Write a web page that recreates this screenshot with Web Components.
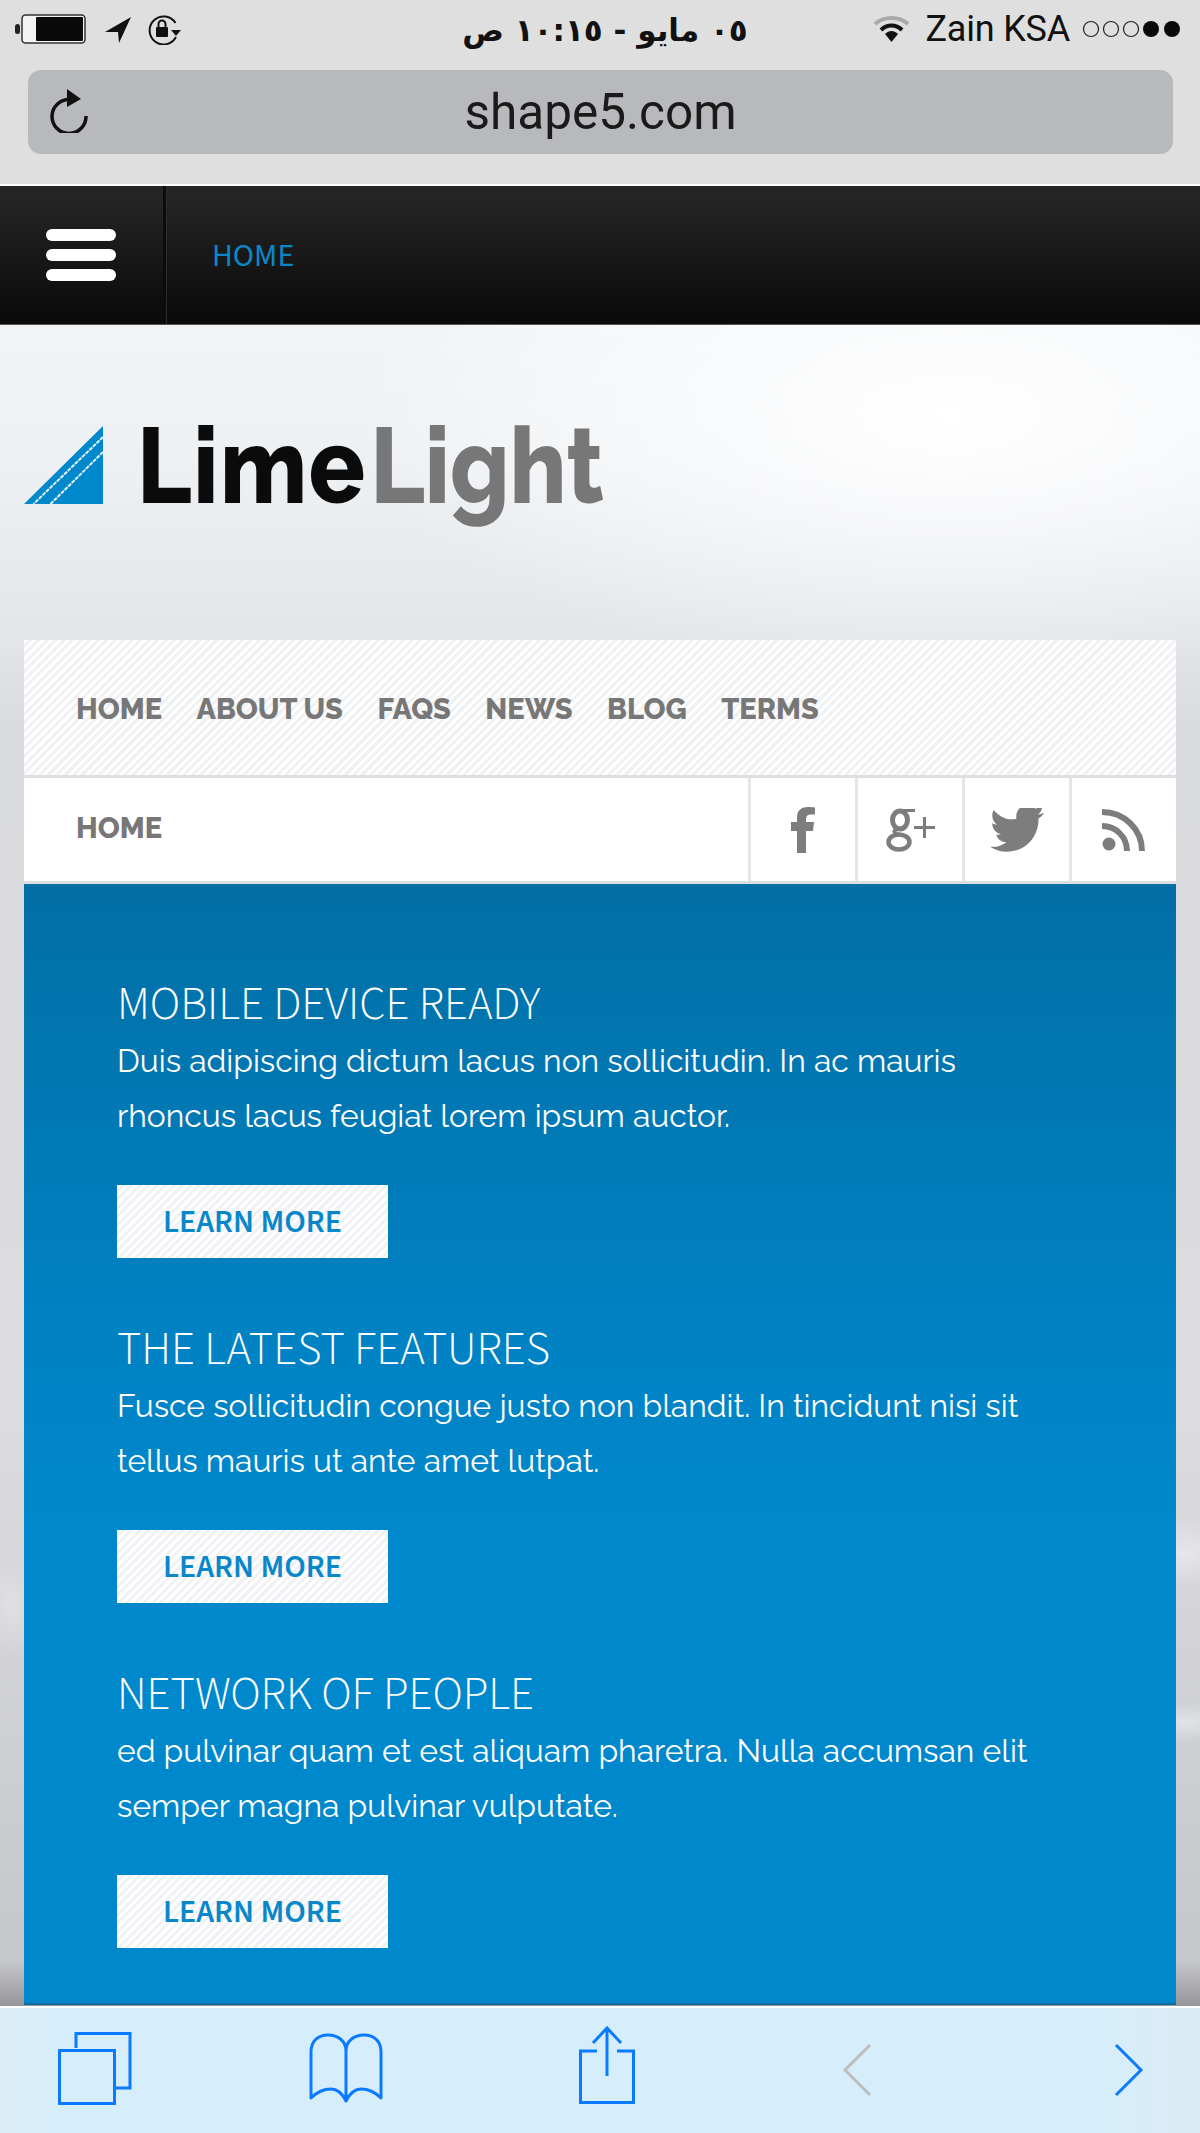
<!DOCTYPE html>
<html lang="en">
<head>
<meta charset="utf-8">
<title>LimeLight - shape5.com</title>
<style>
  html, body { margin: 0; padding: 0; }
  body {
    width: 1200px;
    height: 2133px;
    overflow: hidden;
    display: flex;
    flex-direction: column;
    font-family: "Liberation Sans", sans-serif;
  }
</style>
</head>
<body>
  <browser-chrome url="shape5.com"></browser-chrome>
  <site-nav><span>HOME</span></site-nav>
  <site-page>
    <site-logo></site-logo>
    <main-menu>
      <span>HOME</span><span>ABOUT US</span><span>FAQS</span><span>NEWS</span><span>BLOG</span><span>TERMS</span>
    </main-menu>
    <social-row>HOME</social-row>
    <feature-panel>
      <feature-item heading="MOBILE DEVICE READY">Duis adipiscing dictum lacus non sollicitudin. In ac mauris<br>rhoncus lacus feugiat lorem ipsum auctor.</feature-item>
      <feature-item heading="THE LATEST FEATURES">Fusce sollicitudin congue justo non blandit. In tincidunt nisi sit<br>tellus mauris ut ante amet lutpat.</feature-item>
      <feature-item heading="NETWORK OF PEOPLE">ed pulvinar quam et est aliquam pharetra. Nulla accumsan elit<br>semper magna pulvinar vulputate.</feature-item>
    </feature-panel>
  </site-page>
  <safari-toolbar></safari-toolbar>

<script>
// iOS status bar and address bar
class BrowserChrome extends HTMLElement {
  constructor() {
    super();
    this.attachShadow({ mode: "open" });
    this.shadowRoot.innerHTML = `
      <style>
        :host { display: block; height: 184px; background: #dfdfdf; border-bottom: 2px solid #fff; color: #111; }
        .status { height: 58px; display: grid; grid-template-columns: 1fr auto 1fr; align-items: center; }
        .left { display: flex; align-items: center; padding-left: 15px; }
        .right { display: flex; align-items: center; justify-content: flex-end; padding-right: 18px; }
        .arrow { margin-left: 19px; }
        .lock { margin-left: 17px; }
        .clock { font: 700 31px "DejaVu Sans", sans-serif; direction: rtl; white-space: nowrap; position: relative; top: 1px; left: 5px; }
        .carrier { font: 400 36px Roboto, sans-serif; margin-left: 16px; letter-spacing: -.2px; }
        .dots { margin-left: 12px; }
        .url {
          margin: 12px 27px 0 28px;
          height: 84px;
          border-radius: 13px;
          background: #b8b9bc;
          display: flex;
          align-items: center;
          justify-content: center;
          position: relative;
          font: 400 49.500px Roboto, sans-serif;
          color: #1a1a1a;
        }
        .reload { position: absolute; left: 21px; top: 19px; }
      </style>
      <div class="status">
        <div class="left">
          <svg width="71" height="30" viewBox="0 0 71 30">
            <rect x="0" y="10" width="5" height="10" rx="2.5" fill="#222"/>
            <rect x="7" y="1" width="63" height="28" rx="3.5" fill="#f4f4f4" stroke="#333" stroke-width="1.5"/>
            <rect x="21" y="3" width="47" height="24" rx="1" fill="#0a0a0a"/>
          </svg>
          <svg class="arrow" width="26" height="27" viewBox="0 0 26 27"><path d="M26 1 0 16h13l1 11z" fill="#111"/></svg>
          <svg class="lock" width="33" height="31" viewBox="0 0 33 31">
            <path d="M28 23A14 14 0 1 1 27.500 9" fill="none" stroke="#111" stroke-width="2"/>
            <path d="M23 16h10l-5 6z" fill="#111"/>
            <rect x="8" y="13" width="12" height="10" rx="1" fill="#111"/>
            <path d="M10.500 13V10a3.500 3.500 0 0 1 7 0v3" fill="none" stroke="#111" stroke-width="2"/>
          </svg>
        </div>
        <div class="clock">٠٥ مايو - ١٠:١٥ ص</div>
        <div class="right">
          <svg width="35" height="27" viewBox="0 0 35 27">
            <path d="M1 8C10 0 25 0 34 8" fill="none" stroke="#a9a9a9" stroke-width="4"/>
            <path d="M7 14C13 8 22 8 28 14" fill="none" stroke="#111" stroke-width="4"/>
            <path d="M11 18c4-4 9-4 13 0l-6.500 8z" fill="#111"/>
          </svg>
          <span class="carrier">Zain KSA</span>
          <svg class="dots" width="100" height="18" viewBox="0 0 100 18">
            <g fill="none" stroke="#222" stroke-width="1.200">
              <circle cx="9" cy="9" r="7.500"/><circle cx="29" cy="9" r="7.500"/><circle cx="49" cy="9" r="7.500"/>
            </g>
            <g fill="#0a0a0a"><circle cx="69" cy="9" r="8"/><circle cx="90" cy="9" r="8"/></g>
          </svg>
        </div>
      </div>
      <div class="url">
        <svg class="reload" width="40" height="44" viewBox="0 0 40 44">
          <path d="M21 10.500A17 17 0 1 0 37 27" fill="none" stroke="#111" stroke-width="3.500"/>
          <path d="M18 0 32 10 18 18z" fill="#111"/>
        </svg>
        <span>${this.getAttribute("url")}</span>
      </div>
    `;
  }
}
customElements.define("browser-chrome", BrowserChrome);

// Dark bar at the top of the site, hamburger on the left
class SiteNav extends HTMLElement {
  constructor() {
    super();
    this.attachShadow({ mode: "open" });
    this.shadowRoot.innerHTML = `
      <style>
        :host {
          display: flex;
          height: 138px;
          background: linear-gradient(#262626, #222 18%, #0b0b0b 92%);
          border-bottom: 1px solid #555;
          box-sizing: content-box;
        }
        .burger {
          width: 166px;
          box-sizing: border-box;
          padding-left: 46px;
          display: flex;
          flex-direction: column;
          justify-content: center;
          gap: 8px;
          border-right: 3px solid #0c0c0c;
          box-shadow: 1px 0 0 #2c2c2c;
        }
        .burger i { display: block; width: 70px; height: 12px; border-radius: 6px; background: #fff; }
        .links { display: flex; align-items: center; padding: 2px 0 0 46px; color: #0a87c9; font: 400 32px "Source Sans Pro", "Source Sans 3", "Open Sans", sans-serif; }
      </style>
      <div class="burger"><i></i><i></i><i></i></div>
      <div class="links"><slot></slot></div>
    `;
  }
}
customElements.define("site-nav", SiteNav);

// The cloudy grey background behind everything in the site
class SitePage extends HTMLElement {
  constructor() {
    super();
    this.attachShadow({ mode: "open" });
    this.shadowRoot.innerHTML = `
      <style>
        :host {
          display: block;
          flex: 1;
          min-height: 0;
          overflow: hidden;
          padding: 0 24px;
          background:
            radial-gradient(50px 35px at 1185px 1228px, #e6e7ea, transparent),
            radial-gradient(50px 20px at 1185px 1397px, #e2e3e6, transparent),
            radial-gradient(30px 50px at 10px 1280px, #e0e0e2, transparent),
            linear-gradient(to top, rgba(130,130,133,.7), rgba(130,130,133,0) 45px),
            radial-gradient(600px 260px at 950px 90px, #fff, rgba(255,255,255,0)),
            linear-gradient(#f1f4f7 0, #eef1f4 130px, #e3e5e9 315px, #dadbde 400px, #dcdcde 1100px, #cfd0d4 1400px, #c4c5c9 1680px);
        }
      </style>
      <slot></slot>
    `;
  }
}
customElements.define("site-page", SitePage);

// Triangle mark and the LimeLight word
class SiteLogo extends HTMLElement {
  constructor() {
    super();
    this.attachShadow({ mode: "open" });
    this.shadowRoot.innerHTML = `
      <style>
        :host { display: flex; align-items: flex-start; height: 315px; box-sizing: border-box; padding-top: 101px; }
        svg { flex: none; }
        .word {
          margin: -26px 0 0 34px;
          font: 800 107px/130px Raleway, Lato, sans-serif;
          letter-spacing: 2px;
          color: #0b0b0b;
          filter: blur(.5px);
          white-space: nowrap;
          transform: scaleX(.87);
          transform-origin: left top;
        }
        .word b { font-weight: 800; color: #777; margin-left: 4px; letter-spacing: 0; }
      </style>
      <svg width="79" height="78" viewBox="0 0 79 78">
        <path d="M79 0V78H0z" fill="#0088cc"/>
        <path d="M79 11 9.500 78M79 26 26.500 78" fill="none" stroke="#e8f2f8" stroke-width="2" stroke-dasharray="4 1"/>
      </svg>
      <div class="word">Lime<b>Light</b></div>
    `;
  }
}
customElements.define("site-logo", SiteLogo);

// Striped main menu strip
class MainMenu extends HTMLElement {
  constructor() {
    super();
    this.attachShadow({ mode: "open" });
    this.shadowRoot.innerHTML = `
      <style>
        :host {
          display: flex;
          align-items: center;
          gap: 34.500px;
          height: 138px;
          padding: 2px 0 0 52px;
          box-sizing: border-box;
          background: repeating-linear-gradient(135deg, #fff 0 3px, #f0f1f3 3px 6px);
          border-bottom: 3px solid #dedfe1;
          color: #777;
          font: 800 29px Raleway, Lato, sans-serif;
        }
      </style>
      <slot></slot>
    `;
  }
}
customElements.define("main-menu", MainMenu);

// White row with the page title and the social icons
class SocialRow extends HTMLElement {
  constructor() {
    super();
    this.attachShadow({ mode: "open" });
    this.shadowRoot.innerHTML = `
      <style>
        :host {
          display: flex;
          height: 103px;
          background: #fff;
          border-bottom: 3px solid #dedfe1;
          color: #777;
          font: 800 29px Raleway, Lato, sans-serif;
        }
        .title { flex: 1; display: flex; align-items: center; padding: 0 0 3px 52px; }
        .cell { width: 107px; box-sizing: border-box; border-left: 3px solid #e6e6e9; display: flex; align-items: center; justify-content: center; }
        svg { fill: #7d7d7d; }
      </style>
      <div class="title"><slot></slot></div>
      <div class="cell">
        <svg width="24" height="46" viewBox="0 0 24 46"><path d="M6 46V24H0v-9h6V10C6 3 11 0 17 0c3 0 6 .3 7 .5v7h-4c-3.500 0-5 1.500-5 4.500v3h8l-1 9h-7v22z"/></svg>
      </div>
      <div class="cell">
        <svg width="49" height="44" viewBox="0 0 49 44">
          <ellipse cx="14" cy="12" rx="7.500" ry="9" fill="none" stroke="#7d7d7d" stroke-width="5"/>
          <ellipse cx="13" cy="34" rx="10.500" ry="7.500" fill="none" stroke="#7d7d7d" stroke-width="4.500"/>
          <path d="M10 21C7 24 9 26 14 27" fill="none" stroke="#7d7d7d" stroke-width="4"/>
          <path d="M16 1H29V4H20z"/>
          <path d="M37 9h3v9h9v3h-9v9h-3v-9H28v-3h9z"/>
        </svg>
      </div>
      <div class="cell">
        <svg width="54" height="44" viewBox="0 0 24 19.600"><path transform="translate(0 -2.300)" d="M23.953 4.570a10 10 0 0 1-2.825.775 4.958 4.958 0 0 0 2.163-3.939c-.951.555-2.005.959-3.127 1.184a4.920 4.920 0 0 0-8.384 4.482C7.690 8.095 4.067 6.130 1.640 3.162a4.822 4.822 0 0 0-.666 2.475c0 1.710.870 3.213 2.188 4.096a4.904 4.904 0 0 1-2.228-.616v.060a4.923 4.923 0 0 0 3.946 4.827 4.996 4.996 0 0 1-2.212.085 4.936 4.936 0 0 0 4.604 3.417 9.867 9.867 0 0 1-6.102 2.105c-.390 0-.779-.023-1.170-.067a13.995 13.995 0 0 0 7.557 2.209c9.053 0 13.998-7.496 13.998-13.985 0-.210 0-.420-.015-.630A9.935 9.935 0 0 0 24 4.590z"/></svg>
      </div>
      <div class="cell">
        <svg width="44" height="42" viewBox="0 0 44 42">
          <circle cx="7" cy="35" r="6.500"/>
          <path d="M0 17c14 0 25 11 25 25M0 3c22 0 40 17 40 39" fill="none" stroke="#7d7d7d" stroke-width="6"/>
        </svg>
      </div>
    `;
  }
}
customElements.define("social-row", SocialRow);

// Blue panel that holds the three features
class FeaturePanel extends HTMLElement {
  constructor() {
    super();
    this.attachShadow({ mode: "open" });
    this.shadowRoot.innerHTML = `
      <style>
        :host {
          display: flex;
          flex-direction: column;
          gap: 67px;
          padding: 96px 0 0 93px;
          height: 1121px;
          box-sizing: border-box;
          background: linear-gradient(#026fa5, #0083c5 480px, #0088cc 640px);
          border-bottom: 2px solid #0a6f9f;
        }
      </style>
      <slot></slot>
    `;
  }
}
customElements.define("feature-panel", FeaturePanel);

// One heading, text and button; the text comes through the slot
class FeatureItem extends HTMLElement {
  constructor() {
    super();
    this.attachShadow({ mode: "open" });
    this.shadowRoot.innerHTML = `
      <style>
        :host { display: block; color: #fff; }
        h3 { margin: 0 0 3px; font: 300 46.500px/50px "Source Sans Pro", "Source Sans 3", Lato, sans-serif; white-space: nowrap; }
        p { margin: 0; font: 400 31.850px/55px Raleway, Lato, sans-serif; white-space: nowrap; }
        a {
          display: flex;
          align-items: center;
          justify-content: center;
          width: 271px;
          height: 73px;
          margin-top: 42px;
          background: repeating-linear-gradient(135deg, #fff 0 3px, #f1f2f5 3px 6px);
          color: #0a87c9;
          font: 600 32px "Source Sans Pro", "Source Sans 3", "Open Sans", sans-serif;
        }
      </style>
      <h3>${this.getAttribute("heading")}</h3>
      <p><slot></slot></p>
      <a>LEARN MORE</a>
    `;
  }
}
customElements.define("feature-item", FeatureItem);

// Safari bottom toolbar
class SafariToolbar extends HTMLElement {
  constructor() {
    super();
    this.attachShadow({ mode: "open" });
    this.shadowRoot.innerHTML = `
      <style>
        :host {
          display: flex;
          align-items: flex-start;
          height: 127px;
          border-top: 2px solid #fff;
          box-sizing: border-box;
          padding: 18px 0 0 57px;
          background: linear-gradient(90deg, #dcedf7, #d6eefb 60px, #d6eefb 1100px, #dcebf5);
        }
        svg { flex: none; fill: none; stroke: #0a7aff; stroke-width: 3; }
        .tabs { margin-top: 6px; }
        .book { margin: 7px 0 0 176px; }
        .share { margin-left: 194px; }
        .back { margin: 17px 0 0 206px; stroke: #bdbdbd; }
        .next { margin: 17px 0 0 242px; }
      </style>
      <svg class="tabs" width="75" height="74" viewBox="0 0 75 74">
        <rect x="2.500" y="18.500" width="55" height="53"/>
        <path d="M19 16V1.500H73V56H58"/>
      </svg>
      <svg class="book" width="76" height="70" viewBox="0 0 76 70">
        <path d="M38 68C34 60 30 56 23 56 15 56 8 60 3 65V19C3 8 10 2 20 2 30 2 38 8 38 18zM38 68C42 60 46 56 53 56 61 56 68 60 73 65V19C73 8 66 2 56 2 46 2 38 8 38 18z" stroke-linejoin="round"/>
      </svg>
      <svg class="share" width="58" height="79" viewBox="0 0 58 79">
        <path d="M19 25H2.500V76.500H55.500V25H39"/>
        <path d="M29 50V2M15 17 29 2 43 17"/>
      </svg>
      <svg class="back" width="30" height="54" viewBox="0 0 30 54"><path d="M28 2 3 27 28 52"/></svg>
      <svg class="next" width="30" height="54" viewBox="0 0 30 54"><path d="M2 2 27 27 2 52"/></svg>
    `;
  }
}
customElements.define("safari-toolbar", SafariToolbar);
</script>
</body>
</html>
